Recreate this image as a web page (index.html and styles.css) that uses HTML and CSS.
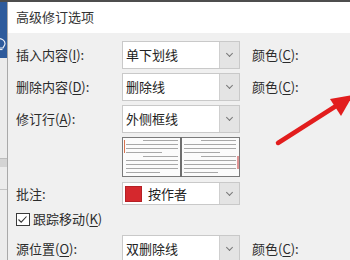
FILE: index.html
```html
<!DOCTYPE html>
<html lang="zh">
<head>
<meta charset="utf-8">
<link rel="stylesheet" href="styles.css">
</head>
<body>
<div class="screen">
  <div class="topbar"></div>
  <div class="main">
    <div class="side">
      <div class="side-blue">
        <svg class="bulb" width="7" height="14" viewBox="0 0 7 14"><path d="M-2 1.5 C2 1.5 5 3.5 5 6.5 C5 8.5 3.5 9.5 3 11 L-2 11" fill="none" stroke="#e8eef7" stroke-width="1.2"/><path d="M-1 12.5 H2.5" stroke="#e8eef7" stroke-width="1.2"/></svg>
      </div>
      <div class="side-gray">
        <div class="side-band"></div>
        <div class="side-line"></div>
      </div>
    </div>
    <div class="dialog">
      <div class="title">高级修订选项</div>
      <div class="content">
        <div class="row r-std">
          <span class="label">插入内容(<u>I</u>):</span>
          <div class="select"><span class="val">单下划线</span><span class="btn"><i class="chev"></i></span></div>
          <span class="color">颜色(<u>C</u>):</span>
        </div>
        <div class="row r-std gap4">
          <span class="label">删除内容(<u>D</u>):</span>
          <div class="select"><span class="val">删除线</span><span class="btn"><i class="chev"></i></span></div>
          <span class="color">颜色(<u>C</u>):</span>
        </div>
        <div class="row r-std gap4">
          <span class="label">修订行(<u>A</u>):</span>
          <div class="select"><span class="val">外侧框线</span><span class="btn"><i class="chev"></i></span></div>
        </div>
        <div class="row r-preview gap4">
          <span class="label"></span>
          <div class="preview">
            <svg width="118" height="40" viewBox="0 0 118 40">
              <rect x="0.5" y="0.5" width="117" height="39" fill="#fbfbfb" stroke="#7a7a7a"/>
              <line x1="59" y1="0" x2="59" y2="40" stroke="#6e6e6e" stroke-width="2"/>
              <g stroke="#a8a8a8" stroke-width="1">
                <line x1="21" y1="3.5" x2="56" y2="3.5"/>
                <line x1="4" y1="7.5" x2="56" y2="7.5"/>
                <line x1="4" y1="11.5" x2="56" y2="11.5"/>
                <line x1="4" y1="15.5" x2="40" y2="15.5"/>
                <line x1="21" y1="19.5" x2="56" y2="19.5"/>
                <line x1="4" y1="23.5" x2="56" y2="23.5"/>
                <line x1="4" y1="27.5" x2="56" y2="27.5"/>
                <line x1="4" y1="31.5" x2="56" y2="31.5"/>
                <line x1="4" y1="35.5" x2="38" y2="35.5"/>
                <line x1="79" y1="3.5" x2="114" y2="3.5"/>
                <line x1="62" y1="7.5" x2="114" y2="7.5"/>
                <line x1="62" y1="11.5" x2="114" y2="11.5"/>
                <line x1="62" y1="15.5" x2="98" y2="15.5"/>
                <line x1="79" y1="19.5" x2="114" y2="19.5"/>
                <line x1="62" y1="23.5" x2="114" y2="23.5"/>
                <line x1="62" y1="27.5" x2="114" y2="27.5"/>
                <line x1="62" y1="31.5" x2="114" y2="31.5"/>
                <line x1="62" y1="35.5" x2="96" y2="35.5"/>
              </g>
              <line x1="2.5" y1="3" x2="2.5" y2="16" stroke="#d9734f" stroke-width="1"/>
              <line x1="116" y1="19" x2="116" y2="32" stroke="#c83030" stroke-width="1"/>
            </svg>
          </div>
        </div>
        <div class="row r-note">
          <span class="label">批注:</span>
          <div class="select small"><span class="swatch"></span><span class="val">按作者</span><span class="btn"><i class="chev"></i></span></div>
        </div>
        <div class="row r-check">
          <span class="checkbox"><svg width="13" height="13" viewBox="0 0 13 13"><path d="M2.5 6.5 L5.2 9.2 L10.5 3.5" fill="none" stroke="#333" stroke-width="1.1"/></svg></span>
          <span class="check-label">跟踪移动(<u>K</u>)</span>
        </div>
        <div class="row r-std r-src">
          <span class="label">源位置(<u>O</u>):</span>
          <div class="select"><span class="val">双删除线</span><span class="btn"><i class="chev"></i></span></div>
          <span class="color">颜色(<u>C</u>):</span>
        </div>
      </div>
    </div>
  </div>
  <svg class="arrow" width="350" height="260" viewBox="0 0 350 260">
    <line x1="278" y1="143" x2="336" y2="106" stroke="#e21d1d" stroke-width="4.5" stroke-linecap="round"/>
    <polygon points="353,95 341,116 330,99" fill="#e21d1d"/>
  </svg>
</div>
</body>
</html>
```
FILE: styles.css
```css
* { box-sizing: border-box; }
html, body { margin: 0; padding: 0; }
body {
  width: 350px;
  height: 260px;
  overflow: hidden;
  background: #f0f0f0;
  font-family: "Noto Sans CJK SC", "Noto Sans", sans-serif;
  font-size: 13px;
  color: #2b2b2b;
}
.screen {
  position: relative;
  width: 350px;
  height: 260px;
  display: flex;
  flex-direction: column;
}
.topbar {
  height: 2px;
  background: #4d4d4d;
  flex: none;
}
.main {
  flex: 1;
  display: flex;
  min-height: 0;
}
.side {
  width: 7px;
  flex: none;
  display: flex;
  flex-direction: column;
}
.side-blue {
  height: 56px;
  background: #2e5b9c;
  padding-top: 35px;
}
.bulb { display: block; }
.side-gray {
  flex: 1;
  background: #ececec;
  padding-top: 100px;
}
.side-band {
  height: 9px;
  background: #d4d4d4;
  border-top: 1px solid #bdbdbd;
}
.side-line {
  height: 1px;
  margin-top: 22px;
  background: #c4c4c4;
}
.dialog {
  flex: 1;
  border-left: 1px solid #a9a9a9;
  display: flex;
  flex-direction: column;
  background: #f0f0f0;
}
.title {
  height: 31px;
  background: #ffffff;
  padding-left: 8px;
  line-height: 29px;
  font-size: 13px;
  color: #333;
  flex: none;
}
.content {
  padding: 8px 0 0 8px;
  display: flex;
  flex-direction: column;
}
.row {
  display: flex;
  align-items: center;
  flex: none;
}
.gap4 { margin-top: 4px; }
.r-std { height: 28px; }
.label {
  width: 106px;
  flex: none;
  line-height: 16px;
}
u { text-decoration: underline; text-underline-offset: 2px; }
.select {
  width: 118px;
  height: 100%;
  flex: none;
  display: flex;
  align-items: stretch;
  background: #fff;
  border: 1px solid #c9c9c9;
}
.val {
  flex: 1;
  padding-left: 3px;
  display: flex;
  align-items: center;
  line-height: 16px;
  color: #222;
}
.btn {
  width: 20px;
  flex: none;
  background: #e4e4e4;
  border-left: 1px solid #cfcfcf;
  display: flex;
  align-items: center;
  justify-content: center;
}
.chev {
  display: block;
  width: 5px;
  height: 5px;
  border-right: 1px solid #777;
  border-bottom: 1px solid #777;
  transform: rotate(45deg);
  margin-top: -3px;
}
.color {
  margin-left: 12px;
  line-height: 16px;
}
.r-preview {
  height: 40px;
  align-items: stretch;
}
.preview svg { display: block; }
.r-note {
  height: 23px;
  margin-top: 5px;
}
.small .val { padding-left: 6px; }
.swatch {
  width: 17px;
  height: 16px;
  flex: none;
  align-self: center;
  margin-left: 2px;
  background: #d5282d;
  border: 1px solid #b52025;
}
.r-check {
  height: 14px;
  margin-top: 7px;
}
.checkbox {
  width: 14px;
  height: 13px;
  flex: none;
  background: #fff;
  border: 1px solid #3a3a3a;
  display: flex;
}
.checkbox svg { display: block; margin: -1px; }
.check-label {
  margin-left: 3px;
  line-height: 16px;
}
.r-src { margin-top: 9px; }
.arrow {
  position: absolute;
  left: 0;
  top: 0;
  pointer-events: none;
}
```
